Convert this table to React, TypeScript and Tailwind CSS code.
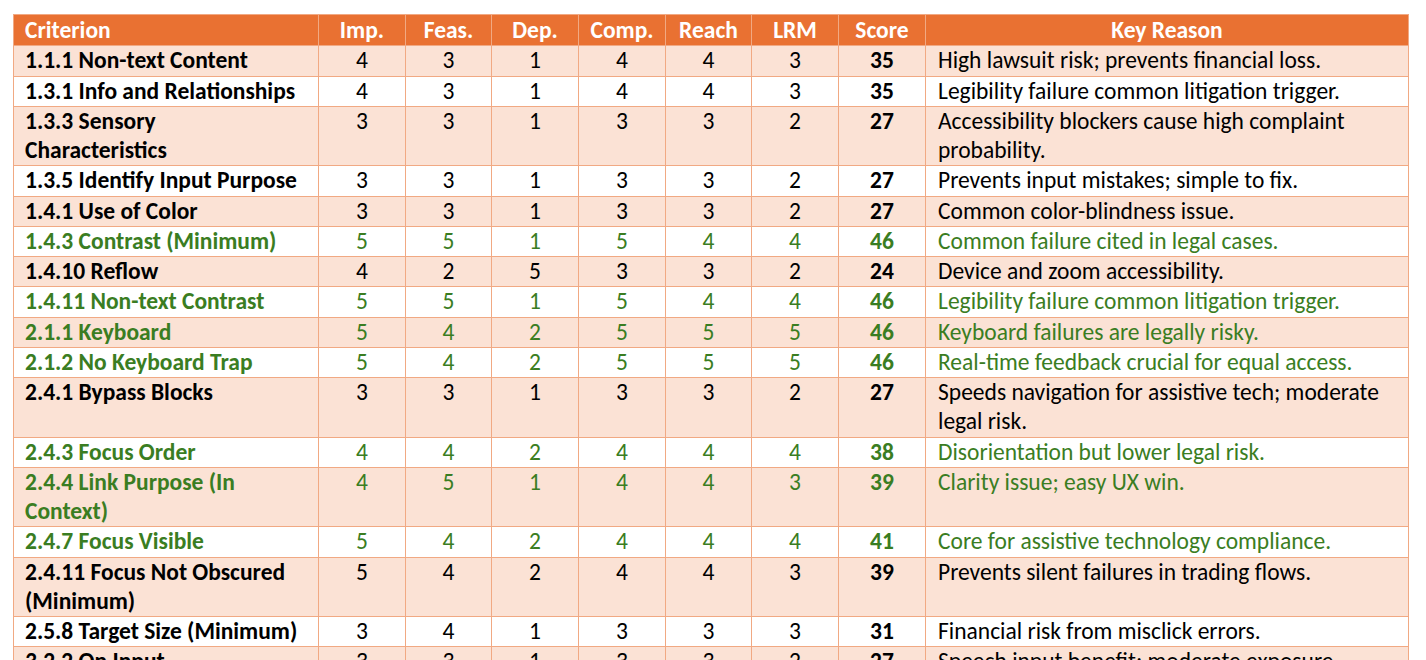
import React from "react";

type Row = {
  name: string[];
  vals: number[];
  score: number;
  reason: string[];
  green?: boolean;
};

const rows: Row[] = [
  { name: ["1.1.1 Non-text Content"], vals: [4, 3, 1, 4, 4, 3], score: 35, reason: ["High lawsuit risk; prevents financial loss."] },
  { name: ["1.3.1 Info and Relationships"], vals: [4, 3, 1, 4, 4, 3], score: 35, reason: ["Legibility failure common litigation trigger."] },
  { name: ["1.3.3 Sensory", "Characteristics"], vals: [3, 3, 1, 3, 3, 2], score: 27, reason: ["Accessibility blockers cause high complaint", "probability."] },
  { name: ["1.3.5 Identify Input Purpose"], vals: [3, 3, 1, 3, 3, 2], score: 27, reason: ["Prevents input mistakes; simple to fix."] },
  { name: ["1.4.1 Use of Color"], vals: [3, 3, 1, 3, 3, 2], score: 27, reason: ["Common color-blindness issue."] },
  { name: ["1.4.3 Contrast (Minimum)"], vals: [5, 5, 1, 5, 4, 4], score: 46, reason: ["Common failure cited in legal cases."], green: true },
  { name: ["1.4.10 Reflow"], vals: [4, 2, 5, 3, 3, 2], score: 24, reason: ["Device and zoom accessibility."] },
  { name: ["1.4.11 Non-text Contrast"], vals: [5, 5, 1, 5, 4, 4], score: 46, reason: ["Legibility failure common litigation trigger."], green: true },
  { name: ["2.1.1 Keyboard"], vals: [5, 4, 2, 5, 5, 5], score: 46, reason: ["Keyboard failures are legally risky."], green: true },
  { name: ["2.1.2 No Keyboard Trap"], vals: [5, 4, 2, 5, 5, 5], score: 46, reason: ["Real-time feedback crucial for equal access."], green: true },
  { name: ["2.4.1 Bypass Blocks"], vals: [3, 3, 1, 3, 3, 2], score: 27, reason: ["Speeds navigation for assistive tech; moderate", "legal risk."] },
  { name: ["2.4.3 Focus Order"], vals: [4, 4, 2, 4, 4, 4], score: 38, reason: ["Disorientation but lower legal risk."], green: true },
  { name: ["2.4.4 Link Purpose (In", "Context)"], vals: [4, 5, 1, 4, 4, 3], score: 39, reason: ["Clarity issue; easy UX win."], green: true },
  { name: ["2.4.7 Focus Visible"], vals: [5, 4, 2, 4, 4, 4], score: 41, reason: ["Core for assistive technology compliance."], green: true },
  { name: ["2.4.11 Focus Not Obscured", "(Minimum)"], vals: [5, 4, 2, 4, 4, 3], score: 39, reason: ["Prevents silent failures in trading flows."] },
  { name: ["2.5.8 Target Size (Minimum)"], vals: [3, 4, 1, 3, 3, 3], score: 31, reason: ["Financial risk from misclick errors."] },
  { name: ["3.2.2 On Input"], vals: [3, 3, 1, 3, 3, 2], score: 27, reason: ["Speech input benefit; moderate exposure."] },
];

const heads = ["Imp.", "Feas.", "Dep.", "Comp.", "Reach", "LRM", "Score"];

const Lines = ({ lines }: { lines: string[] }) => (
  <>
    {lines.map((l, i) => (
      <div key={i} className="whitespace-nowrap">
        {l}
      </div>
    ))}
  </>
);

export default function App() {
  return (
    <div className="bg-white min-h-screen pl-[13px] pt-[14px] overflow-hidden">
      <table className="table-fixed border-collapse w-[1395px] font-['Carlito','Lato',sans-serif] text-[23.5px] leading-[29.25px] text-black">
        <colgroup>
          <col className="w-[305px]" />
          <col className="w-[87px]" />
          <col className="w-[86px]" />
          <col className="w-[87px]" />
          <col className="w-[87px]" />
          <col className="w-[86px]" />
          <col className="w-[87px]" />
          <col className="w-[87px]" />
          <col className="w-[483px]" />
        </colgroup>
        <thead>
          <tr className="bg-[#E97132] text-white font-bold">
            <th className="border border-[#F1A983] px-[11px] pt-[1px] text-left align-top">Criterion</th>
            {heads.map((h) => (
              <th key={h} className="border border-[#F1A983] pt-[1px] text-center align-top">
                {h}
              </th>
            ))}
            <th className="border border-[#F1A983] pt-[1px] text-center align-top">Key Reason</th>
          </tr>
        </thead>
        <tbody>
          {rows.map((r, i) => {
            const bg = i % 2 === 0 ? "bg-[#FBE2D5]" : "bg-white";
            const color = r.green ? "text-[#3A7D22]" : "text-black";
            return (
              <tr key={i} className={`${bg} ${color}`}>
                <td className="border border-[#F1A983] px-[11px] align-top font-bold">
                  <Lines lines={r.name} />
                </td>
                {r.vals.map((v, j) => (
                  <td key={j} className="border border-[#F1A983] text-center align-top">
                    {v}
                  </td>
                ))}
                <td className="border border-[#F1A983] text-center align-top font-bold">{r.score}</td>
                <td className="border border-[#F1A983] px-[12px] align-top">
                  <Lines lines={r.reason} />
                </td>
              </tr>
            );
          })}
        </tbody>
      </table>
    </div>
  );
}
